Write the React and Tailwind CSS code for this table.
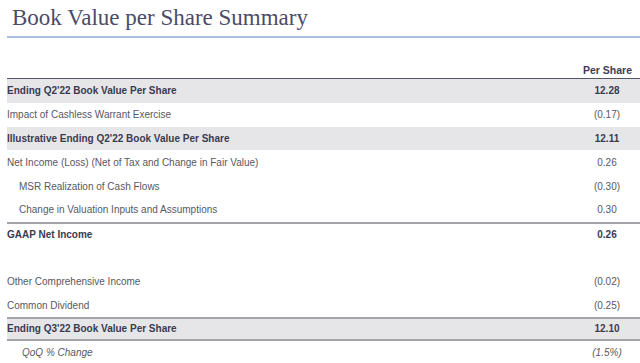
export default function App() {
  const rows = [
    { label: "Ending Q2'22 Book Value Per Share", value: "12.28", bold: true, shade: true },
    { label: "Impact of Cashless Warrant Exercise", value: "(0.17)" },
    { label: "Illustrative Ending Q2'22 Book Value Per Share", value: "12.11", bold: true, shade: true },
    { label: "Net Income (Loss) (Net of Tax and Change in Fair Value)", value: "0.26" },
    { label: "MSR Realization of Cash Flows", value: "(0.30)", indent: true },
    { label: "Change in Valuation Inputs and Assumptions", value: "0.30", indent: true },
    { label: "GAAP Net Income", value: "0.26", bold: true, topLine: true },
    { label: "", value: "" },
    { label: "Other Comprehensive Income", value: "(0.02)" },
    { label: "Common Dividend", value: "(0.25)" },
    { label: "Ending Q3'22 Book Value Per Share", value: "12.10", bold: true, shade: true, topLine: true, bottomLine: true },
    { label: "QoQ % Change", value: "(1.5%)", italic: true },
  ];
  return (
    <div className="w-[640px] h-[363px] overflow-hidden bg-white" style={{ fontFamily: '"Liberation Sans", Arial, sans-serif' }}>
      <div className="pl-[12px] pt-[3px] h-[36px] text-[23px] leading-[30px] text-[#4b4b68]" style={{ fontFamily: '"Liberation Serif", "Times New Roman", serif' }}>
        Book Value per Share Summary
      </div>
      <div className="ml-[7px] h-[2px] bg-[#a9c1dc]" />
      <div className="ml-[7px] flex items-end h-[41px] border-b-[1.5px] border-[#55556a]">
        <div className="flex-1" />
        <div className="whitespace-nowrap text-right pr-[8px] text-[10.5px] font-bold text-[#3d3d55] leading-[14px] pb-[1px]">Per Share</div>
      </div>
      <div className="ml-[7px]">
        {rows.map((r, i) => (
          <div
            key={i}
            className={
              "flex items-center h-[23.8px] text-[10px] whitespace-nowrap " +
              (r.shade ? "bg-[#e6e6e9] " : "") +
              (r.topLine ? "border-t-2 border-[#a3a3a8] " : "") +
              (r.bottomLine ? "border-b-2 " : "") +
              (r.bold ? "font-bold text-[#3b3b50] " : "text-[#58585f] ") +
              (r.italic ? "italic " : "")
            }
          >
            <div className={"flex-1 " + (r.indent ? "pl-[12px]" : r.italic ? "pl-[15px]" : "pl-0")}>{r.label}</div>
            <div className="w-[66px] text-center">{r.value}</div>
          </div>
        ))}
      </div>
    </div>
  );
}
